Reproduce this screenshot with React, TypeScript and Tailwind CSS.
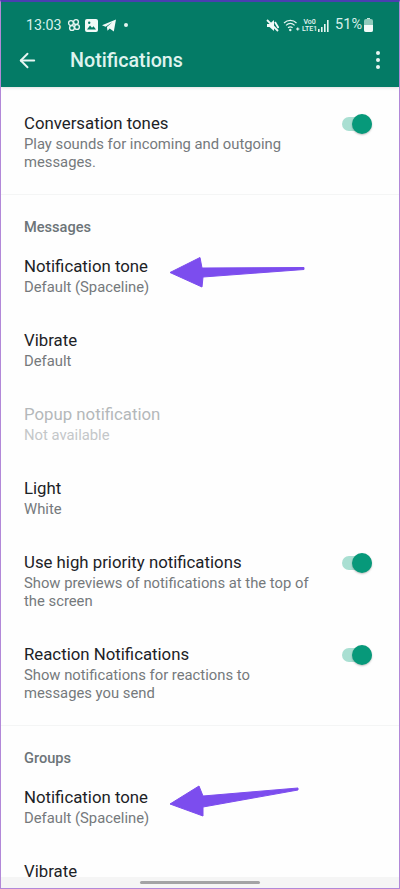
import { ArrowLeft } from "lucide-react";

interface RowProps {
  title: string;
  sub?: string;
  disabled?: boolean;
  toggle?: boolean;
  arrow?: string;
}

function Toggle() {
  return (
    <div className="relative mt-[6px] h-[14px] w-[30px] shrink-0 rounded-full bg-[#a9dfd2]">
      {/* thumb sits over the track */}
      <div className="absolute right-0 top-[-3px] h-5 w-5 rounded-full bg-[#07997a] shadow-[0_1px_2px_rgba(0,0,0,0.25)]" />
    </div>
  );
}

function Row({ title, sub, disabled, toggle, arrow }: RowProps) {
  return (
    <div className="relative flex items-start justify-between gap-6 pb-4 pl-[23px] pr-[27px] pt-4">
      <div className="min-w-0">
        <div className={`h-6 text-[16.8px] leading-[25px] ${disabled ? "text-[#b4b8ba]" : "text-[#1c2226]"}`}>{title}</div>
        {sub && (
          <div className={`text-[14.8px] leading-[18px] ${disabled ? "text-[#c4c7c9]" : "text-[#75797c]"}`}>{sub}</div>
        )}
      </div>
      {toggle && <Toggle />}
      {arrow && (
        <svg className="absolute left-0 top-0 h-[74px] w-[398px]" viewBox="0 0 398 74">
          <path d={arrow} fill="#7c4dee" stroke="#7c4dee" strokeWidth="1" strokeLinejoin="round" />
        </svg>
      )}
    </div>
  );
}

function SectionHeader({ label }: { label: string }) {
  return (
    <div className="mt-[7px] border-t border-[#f4f5f5] pl-[23px] pt-[21px]">
      <div className="h-[22px] text-[14.6px] font-medium leading-[22px] text-[#6c7478]">{label}</div>
    </div>
  );
}

function StatusBar() {
  return (
    <div className="flex h-[46px] items-center justify-between pl-[25px] pr-[26px] pt-[1px] text-[#d8f0ea]">
      <div className="flex items-center">
        <span className="text-[14.3px] leading-none">13:03</span>
        {/* pinwheel */}
        <svg className="ml-[5px] h-[14px] w-[14px]" viewBox="0 0 14 14" fill="none" stroke="#e6f5f1" strokeWidth="1.4">
          <circle cx="4" cy="5" r="2.4" />
          <circle cx="9" cy="4" r="2.4" />
          <circle cx="10" cy="9" r="2.4" />
          <circle cx="5" cy="10" r="2.4" />
        </svg>
        {/* gallery */}
        <svg className="ml-[4px] h-[13px] w-[13px]" viewBox="0 0 13 13">
          <rect width="13" height="13" rx="2" fill="#f2faf8" />
          <path d="M2 10.5l3-4 2 2.2 1.5-1.4 2.5 3.2z" fill="#047b66" />
          <circle cx="4.2" cy="3.8" r="1.2" fill="#047b66" />
        </svg>
        {/* paper plane */}
        <svg className="ml-[4px] h-[13px] w-[14px]" viewBox="0 0 14 13" fill="#f2faf8">
          <path d="M0 6.2L14 .5l-2.2 12-4.1-3-2.2 2.3-.6-3.7L10.5 3 3.6 7.7z" />
        </svg>
        <span className="ml-[8px] h-[4px] w-[4px] rounded-full bg-[#e6f5f1]" />
      </div>
      <div className="flex items-center">
        {/* muted speaker */}
        <svg className="h-[13px] w-[13px]" viewBox="0 0 13 13" fill="#f2faf8">
          <path d="M1 5h2.5L8 1v11L3.5 8H1z" />
          <path d="M1 1l11 11" stroke="#f2faf8" strokeWidth="1.8" />
          <path d="M9 3l3.5 6" stroke="#f2faf8" strokeWidth="1.8" />
        </svg>
        {/* wifi */}
        <svg className="ml-[4px] h-[13px] w-[17px]" viewBox="0 0 17 13" fill="none" stroke="#e6f5f1" strokeWidth="1.2">
          <path d="M1 4c3.6-3.4 9-3.4 12.5 0" />
          <path d="M3 6.4c2.6-2.4 6-2.4 8.6 0" />
          <path d="M5 8.8c1.4-1.2 3.2-1.2 4.6 0" />
          <circle cx="7.3" cy="11" r=".6" fill="#e6f5f1" />
          <path d="M13 10h3.4M14.7 8.4v3.2" />
        </svg>
        <div className="ml-[2px] flex w-[15px] flex-col items-center text-[7px] font-medium leading-[7px] text-[#e6f5f1]">
          <span>Vo0</span>
          <span>LTE1</span>
        </div>
        {/* signal */}
        <svg className="ml-[1px] h-[12px] w-[11px]" viewBox="0 0 11 12" fill="#e6f5f1">
          <rect x="0" y="9" width="1.6" height="3" />
          <rect x="3" y="7" width="1.6" height="5" />
          <rect x="6" y="4" width="1.6" height="8" />
          <rect x="9" y="0" width="1.6" height="12" />
        </svg>
        <span className="ml-[6px] text-[14.5px] leading-none">51%</span>
        {/* battery */}
        <div className="relative ml-[2px] h-[13px] w-[9px] rounded-[2px] bg-[#8fcabb]">
          <div className="absolute left-[3px] top-[-1px] h-[1px] w-[3px] bg-[#c9e7df]" />
          <div className="absolute bottom-0 left-0 h-[7px] w-full rounded-b-[2px] bg-[#f2faf8]" />
        </div>
      </div>
    </div>
  );
}

export default function App() {
  return (
    <div
      className="relative h-[889px] w-[400px] overflow-hidden border-x border-b border-t-2 border-x-[#b288d8] border-b-[#b288d8] border-t-[#4a3fb0] bg-[#fefefe]"
      style={{ fontFamily: "Roboto, sans-serif" }}
    >
      <header className="h-[85px] bg-[#047b66] shadow-[0_1px_3px_rgba(0,0,0,0.12)]">
        <StatusBar />
        <div className="flex h-[24px] items-center pl-[15px] pr-[19px]">
          <ArrowLeft className="h-[23px] w-[23px] text-[#e8f5f2]" strokeWidth={2} />
          <div className="ml-[31px] flex-1 pt-[2px] text-[19.7px] font-medium leading-none text-[#dff3ee]">Notifications</div>
          <div className="flex flex-col gap-[3px]">
            <span className="h-[4px] w-[4px] rounded-full bg-[#e8f5f2]" />
            <span className="h-[4px] w-[4px] rounded-full bg-[#e8f5f2]" />
            <span className="h-[4px] w-[4px] rounded-full bg-[#e8f5f2]" />
          </div>
        </div>
      </header>

      <main className="pt-2">
        <Row title="Conversation tones" sub="Play sounds for incoming and outgoing messages." toggle />
        <SectionHeader label="Messages" />
        <Row
          title="Notification tone"
          sub="Default (Spaceline)"
          arrow="M169 34.5L199 19.5L201 30L303 29.5V31.5L202 39L201 49Z"
        />
        <Row title="Vibrate" sub="Default" />
        <Row title="Popup notification" sub="Not available" disabled />
        <Row title="Light" sub="White" />
        <Row title="Use high priority notifications" sub="Show previews of notifications at the top of the screen" toggle />
        <Row title="Reaction Notifications" sub="Show notifications for reactions to messages you send" toggle />
        <SectionHeader label="Groups" />
        <Row
          title="Notification tone"
          sub="Default (Spaceline)"
          arrow="M169 35L198 17L202 27L297 19V21L202 38L202 47Z"
        />
        <Row title="Vibrate" />
      </main>

      {/* gesture bar */}
      <div className="absolute bottom-0 left-0 flex h-[11px] w-full items-center justify-center bg-[#f4f4f4]/95">
        <div className="h-[3px] w-[120px] rounded-full bg-[#a3a3a5]" />
      </div>
    </div>
  );
}
